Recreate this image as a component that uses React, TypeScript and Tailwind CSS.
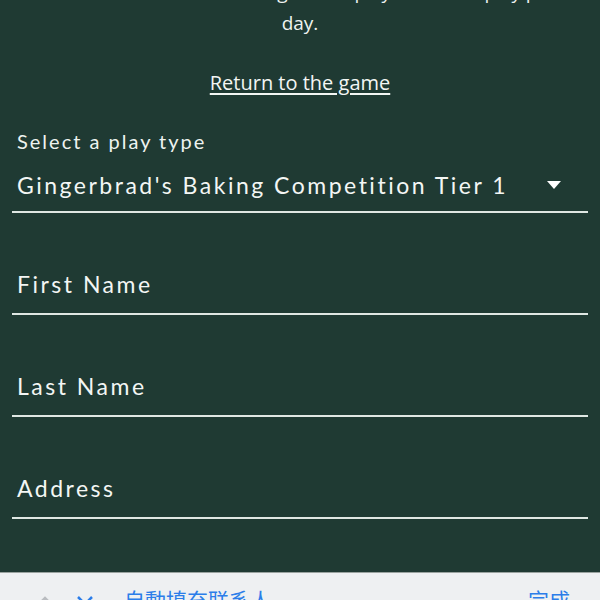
const fieldFont = { fontFamily: 'Lato, "Noto Sans", sans-serif' };
const bodyFont = { fontFamily: '"Open Sans", sans-serif' };
const cjkFont = { fontFamily: '"Noto Sans CJK TC", "Noto Sans CJK SC", sans-serif' };

function Field({ label }: { label: string }) {
  return (
    <div className="mx-3 flex h-[102px] flex-col justify-end border-b-2 border-[#dfe7e3]">
      <span className="px-[5px] pb-[11px] text-[23px] tracking-[2.5px] text-[#f3f6f4]">{label}</span>
    </div>
  );
}

export default function App() {
  return (
    <div
      className="relative flex h-[600px] w-[600px] flex-col overflow-hidden bg-[#1f3a33] text-white"
      style={fieldFont}
    >
      <div className="-mt-[23px] text-center text-[19px] leading-[31px] text-[#eef3f0]" style={bodyFont}>
        <p className="whitespace-nowrap">Thanks! Come back to the game to play. Limit is 1 play per</p>
        <p>day.</p>
      </div>

      <div className="mt-[29px] text-center" style={bodyFont}>
        <a className="text-[20px] text-[#f3f6f4] underline underline-offset-[3px]">Return to the game</a>
      </div>

      <div className="mx-3 mt-[28px] border-b-2 border-[#dfe7e3] pb-[8px]">
        <p className="px-[5px] text-[20px] tracking-[2px] text-[#eef3f0]">Select a play type</p>
        <div className="mt-[12px] flex items-center justify-between pl-[5px] pr-[26px]">
          <span className="text-[23px] tracking-[2.5px] text-[#f3f6f4]">Gingerbrad's Baking Competition Tier 1</span>
          <svg width="16" height="10" viewBox="0 0 16 10">
            <path d="M1 1h14L8 9z" fill="#ffffff" />
          </svg>
        </div>
      </div>

      <Field label="First Name" />
      <Field label="Last Name" />
      <Field label="Address" />

      <div className="absolute bottom-0 left-0 right-0 h-[28px] border-t border-[#9aa3a0] bg-[#eef0f2]">
        <div className="flex items-start px-[36px] pt-[16px] text-[21px] leading-none">
          <svg width="18" height="12" viewBox="0 0 18 12" className="mt-[6px]">
            <path d="M2 10L9 3l7 7" fill="none" stroke="#b9bcc0" strokeWidth="2.5" />
          </svg>
          <svg width="18" height="12" viewBox="0 0 18 12" className="ml-[22px] mt-[6px]">
            <path d="M2 2l7 7 7-7" fill="none" stroke="#2b7de9" strokeWidth="2.5" />
          </svg>
          <span className="ml-[30px] text-[#2b7de9]" style={cjkFont}>
            自動填充联系人
          </span>
          <span className="ml-auto mr-[-6px] text-[#2b7de9]" style={cjkFont}>
            完成
          </span>
        </div>
      </div>
    </div>
  );
}
